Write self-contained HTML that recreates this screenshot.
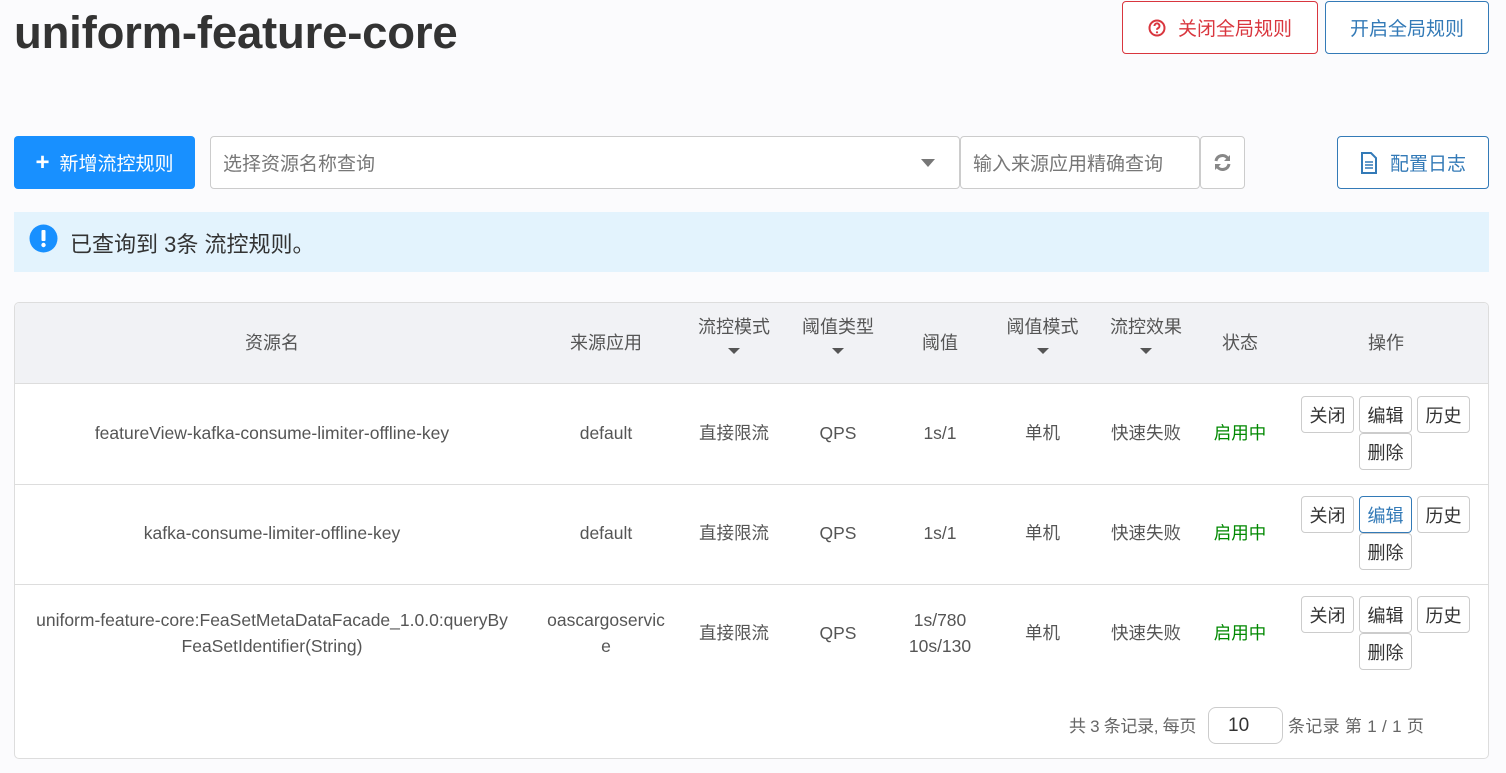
<!DOCTYPE html>
<html><head><meta charset="utf-8"><style>
*{box-sizing:border-box;margin:0;padding:0}
body{width:1506px;height:773px;background:#fbfbfd;font-family:"Liberation Sans","Noto Sans CJK SC",sans-serif;color:#555;position:relative;overflow:hidden}
.a{position:absolute}
h1{position:absolute;left:14px;top:7px;font-size:45.5px;font-weight:bold;color:#333;letter-spacing:-0.2px}
.btn{position:absolute;border:1px solid;border-radius:4px;font-size:19px;display:flex;align-items:center;justify-content:center;background:#fff}
.c{position:absolute;text-align:center;font-size:17.5px;color:#555;display:flex;align-items:center;justify-content:center;line-height:26px}
.h{font-size:18px}
.sb{position:absolute;width:53px;height:37px;border:1px solid #ccc;border-radius:4px;background:#fff;font-size:18px;color:#333;display:flex;align-items:center;justify-content:center}
.tri{display:block;width:0;height:0;border-left:6px solid transparent;border-right:6px solid transparent;border-top:6px solid #555;margin:8px auto 0}
</style></head><body>
<h1>uniform-feature-core</h1>
<div class="btn" style="left:1122px;top:1px;width:196px;height:53px;border-color:#d9363e;color:#d9363e"><svg width="18" height="18" viewBox="0 0 18 18" style="margin-right:12px"><circle cx="9" cy="9" r="7.5" fill="none" stroke="#d9363e" stroke-width="2"/><path d="M6.5 7a2.5 2.5 0 1 1 3.5 2.2c-.7.4-1 .8-1 1.6" fill="none" stroke="#d9363e" stroke-width="2"/><circle cx="9" cy="13.3" r="1.1" fill="#d9363e"/></svg>关闭全局规则</div>
<div class="btn" style="left:1325px;top:1px;width:164px;height:53px;border-color:#337ab7;color:#337ab7">开启全局规则</div>
<div class="btn" style="left:14px;top:136px;width:181px;height:53px;border:none;background:#1890ff;color:#fff;font-size:19px"><span style="font-size:24px;font-weight:bold;margin-right:10px">+</span>新增流控规则</div>
<div class="a" style="left:210px;top:136px;width:750px;height:53px;border:1px solid #ccc;border-radius:4px;background:#fff;font-size:19px;color:#777;padding:12px 12px">选择资源名称查询<span style="position:absolute;right:24px;top:22px;border-left:7px solid transparent;border-right:7px solid transparent;border-top:8px solid #777"></span></div>
<div class="a" style="left:960px;top:136px;width:240px;height:53px;border:1px solid #ccc;border-radius:4px;background:#fff;font-size:19px;color:#777;padding:12px 12px">输入来源应用精确查询</div>
<div class="a" style="left:1200px;top:136px;width:45px;height:53px;border:1px solid #ccc;border-radius:4px;background:#fff"></div>
<svg class="a" style="left:1213px;top:153px" width="19" height="19" viewBox="0 0 19 19"><path d="M3 8a6.5 6.5 0 0 1 11.5-3" fill="none" stroke="#888" stroke-width="3"/><path d="M17 2v6h-6z" fill="#888"/><path d="M16 11a6.5 6.5 0 0 1-11.5 3" fill="none" stroke="#888" stroke-width="3"/><path d="M2 17v-6h6z" fill="#888"/></svg>
<div class="btn" style="left:1337px;top:136px;width:152px;height:53px;border-color:#337ab7;color:#337ab7"><svg width="18" height="22" viewBox="0 0 18 22" style="margin-right:12px"><path d="M2 1h9l5 5v15H2z" fill="none" stroke="#337ab7" stroke-width="2"/><path d="M5 10h8M5 13h8M5 16h8" stroke="#337ab7" stroke-width="1.5"/></svg>配置日志</div>
<div class="a" style="left:14px;top:212px;width:1475px;height:60px;background:#e3f3fd"></div>
<svg class="a" style="left:29px;top:224px" width="29" height="29" viewBox="0 0 29 29"><circle cx="14.5" cy="14.5" r="14" fill="#1890ff"/><rect x="12.5" y="6" width="4" height="11" rx="1" fill="#fff"/><circle cx="14.5" cy="21" r="2.2" fill="#fff"/></svg>
<div class="a" style="left:70px;top:227px;font-size:22px;color:#333">已查询到 3条 流控规则。</div>
<div class="a" style="left:14px;top:302px;width:1475px;height:457px;border:1px solid #ddd;border-radius:5px;background:#fff;overflow:hidden">
<div class="a" style="left:0;top:0;width:1475px;height:81px;background:#f1f2f5;border-bottom:1px solid #ddd"></div>
<div class="a" style="left:0;top:181px;width:1475px;height:1px;background:#ddd"></div>
<div class="a" style="left:0;top:281px;width:1475px;height:1px;background:#ddd"></div>
</div>
<div class="c h" style="left:14px;top:302px;width:516px;height:81px">资源名</div>
<div class="c h" style="left:530px;top:302px;width:152px;height:81px">来源应用</div>
<div class="c h" style="left:682px;top:314px;width:104px;height:60px;display:block">流控模式<span class="tri"></span></div>
<div class="c h" style="left:786px;top:314px;width:104px;height:60px;display:block">阈值类型<span class="tri"></span></div>
<div class="c h" style="left:890px;top:302px;width:100px;height:81px">阈值</div>
<div class="c h" style="left:990px;top:314px;width:105px;height:60px;display:block">阈值模式<span class="tri"></span></div>
<div class="c h" style="left:1095px;top:314px;width:102px;height:60px;display:block">流控效果<span class="tri"></span></div>
<div class="c h" style="left:1197px;top:302px;width:86px;height:81px">状态</div>
<div class="c h" style="left:1283px;top:302px;width:206px;height:81px">操作</div>
<div class="c" style="left:14px;top:383px;width:516px;height:100px">featureView-kafka-consume-limiter-offline-key</div>
<div class="c" style="left:14px;top:483px;width:516px;height:100px">kafka-consume-limiter-offline-key</div>
<div class="c" style="left:14px;top:583px;width:516px;height:100px">uniform-feature-core:FeaSetMetaDataFacade_1.0.0:queryBy<br>FeaSetIdentifier(String)</div>
<div class="c" style="left:530px;top:383px;width:152px;height:100px">default</div>
<div class="c" style="left:530px;top:483px;width:152px;height:100px">default</div>
<div class="c" style="left:530px;top:583px;width:152px;height:100px">oascargoservic<br>e</div>
<div class="c" style="left:682px;top:383px;width:104px;height:100px">直接限流</div>
<div class="c" style="left:682px;top:483px;width:104px;height:100px">直接限流</div>
<div class="c" style="left:682px;top:583px;width:104px;height:100px">直接限流</div>
<div class="c" style="left:786px;top:383px;width:104px;height:100px">QPS</div>
<div class="c" style="left:786px;top:483px;width:104px;height:100px">QPS</div>
<div class="c" style="left:786px;top:583px;width:104px;height:100px">QPS</div>
<div class="c" style="left:890px;top:383px;width:100px;height:100px">1s/1</div>
<div class="c" style="left:890px;top:483px;width:100px;height:100px">1s/1</div>
<div class="c" style="left:890px;top:583px;width:100px;height:100px">1s/780<br>10s/130</div>
<div class="c" style="left:990px;top:383px;width:105px;height:100px">单机</div>
<div class="c" style="left:990px;top:483px;width:105px;height:100px">单机</div>
<div class="c" style="left:990px;top:583px;width:105px;height:100px">单机</div>
<div class="c" style="left:1095px;top:383px;width:102px;height:100px">快速失败</div>
<div class="c" style="left:1095px;top:483px;width:102px;height:100px">快速失败</div>
<div class="c" style="left:1095px;top:583px;width:102px;height:100px">快速失败</div>
<div class="c" style="left:1197px;top:383px;width:86px;height:100px;color:#080">启用中</div>
<div class="c" style="left:1197px;top:483px;width:86px;height:100px;color:#080">启用中</div>
<div class="c" style="left:1197px;top:583px;width:86px;height:100px;color:#080">启用中</div>
<div class="sb" style="left:1301px;top:396px">关闭</div><div class="sb" style="left:1359px;top:396px">编辑</div><div class="sb" style="left:1417px;top:396px">历史</div><div class="sb" style="left:1359px;top:433px">删除</div>
<div class="sb" style="left:1301px;top:496px">关闭</div><div class="sb" style="left:1359px;top:496px;border-color:#337ab7;color:#337ab7">编辑</div><div class="sb" style="left:1417px;top:496px">历史</div><div class="sb" style="left:1359px;top:533px">删除</div>
<div class="sb" style="left:1301px;top:596px">关闭</div><div class="sb" style="left:1359px;top:596px">编辑</div><div class="sb" style="left:1417px;top:596px">历史</div><div class="sb" style="left:1359px;top:633px">删除</div>
<div class="a" style="left:1069px;top:712px;font-size:17px;color:#666;letter-spacing:-0.3px">共 3 条记录, 每页</div>
<div class="a" style="left:1208px;top:707px;width:75px;height:37px;border:1px solid #ccc;border-radius:8px;background:#fff;font-size:19px;color:#333;padding:7px 0 0 19px">10</div>
<div class="a" style="left:1288px;top:712px;font-size:17px;color:#666;letter-spacing:0.3px">条记录 第 1 / 1 页</div>
</body></html>
